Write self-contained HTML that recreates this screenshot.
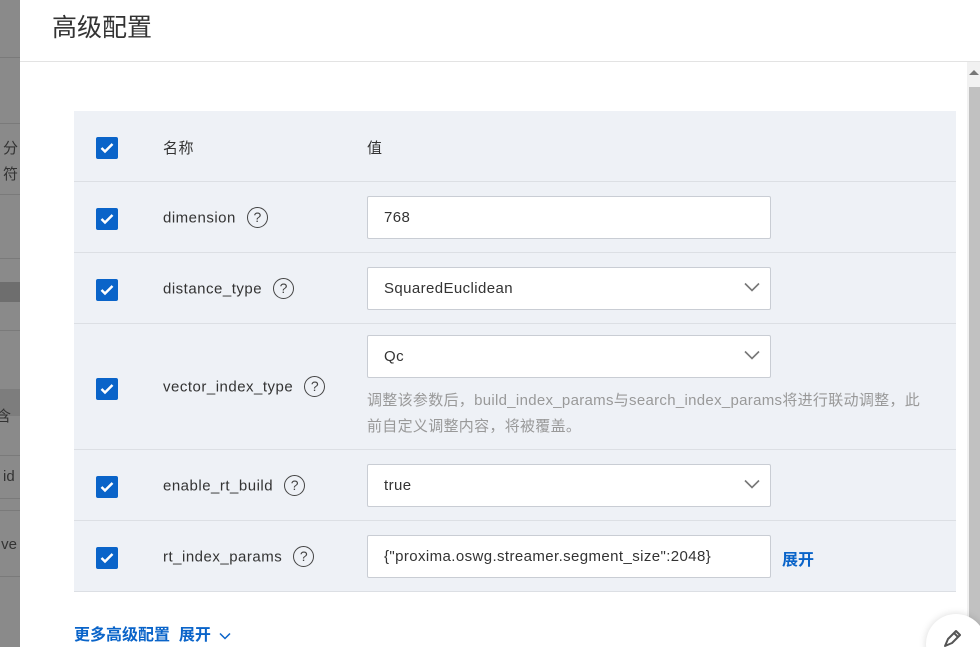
<!DOCTYPE html>
<html style="width:980px;height:647px;overflow:hidden"><head><meta charset="utf-8"><style>
*{margin:0;padding:0;box-sizing:border-box}
body{width:980px;height:647px;overflow:hidden;position:relative;background:#fff;font-family:"Liberation Sans","Noto Sans CJK SC",sans-serif;color:#333}
.ov{position:absolute;left:0;top:0;width:20px;height:647px;background:#8a8a8a;overflow:hidden}
.ov div{position:absolute;left:0;width:20px;border-top:1px solid #7a7a7a}
.ov span{position:absolute;left:3px;font-size:15px;color:#333;white-space:nowrap}
.modal{position:absolute;left:20px;top:0;width:960px;height:647px;background:#fff}
.title{position:absolute;left:52px;top:8px;font-size:25px;color:#333}
.hl{position:absolute;left:20px;right:0;top:61px;border-top:1px solid #e3e3e3}
.sb{position:absolute;left:967px;top:62px;width:13px;height:585px;background:#f1f1f1}
.sb .th{position:absolute;left:2px;top:25px;width:11px;height:560px;background:#c1c1c1}
.sb .ar{position:absolute;left:2px;top:8px;width:0;height:0;border-left:5px solid transparent;border-right:5px solid transparent;border-bottom:5px solid #777}
.tbl{position:absolute;left:74px;top:111px;width:882px;height:481px;background:#eef1f6;border-bottom:1px solid #dcdfe4}
.line{position:absolute;left:74px;width:882px;border-top:1px solid #dcdfe4}
.cb{position:absolute;left:96px;width:22px;height:22px;background:#0a64c9;border-radius:2px}
.cb svg{position:absolute;left:4px;top:5px}
.nm{position:absolute;left:163px;font-size:15px;color:#333;letter-spacing:0.5px}
.q{display:inline-block;width:21px;height:21px;border:1.5px solid #444;border-radius:50%;text-align:center;font-size:14px;line-height:18px;color:#444;margin-left:11px;vertical-align:middle;position:relative;top:-1px;letter-spacing:0}
.in{position:absolute;left:367px;width:404px;height:43px;background:#fff;border:1px solid #c9cdd4;border-radius:2px;font-size:15px;line-height:41px;padding-left:16px;color:#333;letter-spacing:0.4px}
.in svg{position:absolute;right:10px;top:14px}
.help{position:absolute;left:367px;font-size:15px;color:#999;line-height:26px;width:572px;letter-spacing:0.3px}
.blue{color:#0a64c9;font-weight:bold;font-size:16px;position:absolute}
.fab{position:absolute;left:926px;top:614px;width:60px;height:60px;border-radius:50%;background:#fff;box-shadow:0 0 8px rgba(0,0,0,.15)}
</style></head><body>
<div class="ov">
<div style="top:57px"></div><div style="top:123px"></div><div style="top:194px"></div><div style="top:258px"></div>
<div style="top:282px;height:20px;background:#6e6e6e;border:none"></div>
<div style="top:330px"></div>
<div style="top:389px;height:27px;background:#7d7d7d;border:none"></div>
<div style="top:455px"></div><div style="top:498px"></div><div style="top:510px"></div><div style="top:576px"></div>
<span style="top:137px">分</span><span style="top:163px">符</span>
<span style="top:405px;left:-4px">含</span><span style="top:468px">id</span><span style="top:536px;left:-3px">,ve</span>
</div>
<div class="modal"></div>
<div class="title">高级配置</div>
<div class="hl"></div>
<div class="sb"><div class="ar"></div><div class="th"></div></div>
<div class="tbl"></div>
<div class="line" style="top:181px"></div><div class="line" style="top:252px"></div><div class="line" style="top:323px"></div><div class="line" style="top:449px"></div><div class="line" style="top:520px"></div>

<div class="cb" style="top:137px"><svg width="14" height="12" viewBox="0 0 14 12"><path d="M1.5 6l3.5 3.5L12.5 2" stroke="#fff" stroke-width="2.5" fill="none"/></svg></div>
<div class="nm" style="top:137px">名称</div>
<div class="nm" style="left:367px;top:137px">值</div>

<div class="cb" style="top:208px"><svg width="14" height="12" viewBox="0 0 14 12"><path d="M1.5 6l3.5 3.5L12.5 2" stroke="#fff" stroke-width="2.5" fill="none"/></svg></div>
<div class="nm" style="top:208px">dimension<span class="q">?</span></div>
<div class="in" style="top:196px">768</div>

<div class="cb" style="top:279px"><svg width="14" height="12" viewBox="0 0 14 12"><path d="M1.5 6l3.5 3.5L12.5 2" stroke="#fff" stroke-width="2.5" fill="none"/></svg></div>
<div class="nm" style="top:279px">distance_type<span class="q">?</span></div>
<div class="in" style="top:267px">SquaredEuclidean<svg width="16" height="10" viewBox="0 0 16 10"><path d="M1 1.5l7 7 7-7" stroke="#777" stroke-width="1.6" fill="none"/></svg></div>

<div class="cb" style="top:378px"><svg width="14" height="12" viewBox="0 0 14 12"><path d="M1.5 6l3.5 3.5L12.5 2" stroke="#fff" stroke-width="2.5" fill="none"/></svg></div>
<div class="nm" style="top:377px">vector_index_type<span class="q">?</span></div>
<div class="in" style="top:335px">Qc<svg width="16" height="10" viewBox="0 0 16 10"><path d="M1 1.5l7 7 7-7" stroke="#777" stroke-width="1.6" fill="none"/></svg></div>
<div class="help" style="top:388px">调整该参数后，build_index_params与search_index_params将进行联动调整，此<br>前自定义调整内容，将被覆盖。</div>

<div class="cb" style="top:476px"><svg width="14" height="12" viewBox="0 0 14 12"><path d="M1.5 6l3.5 3.5L12.5 2" stroke="#fff" stroke-width="2.5" fill="none"/></svg></div>
<div class="nm" style="top:476px">enable_rt_build<span class="q">?</span></div>
<div class="in" style="top:464px">true<svg width="16" height="10" viewBox="0 0 16 10"><path d="M1 1.5l7 7 7-7" stroke="#777" stroke-width="1.6" fill="none"/></svg></div>

<div class="cb" style="top:547px"><svg width="14" height="12" viewBox="0 0 14 12"><path d="M1.5 6l3.5 3.5L12.5 2" stroke="#fff" stroke-width="2.5" fill="none"/></svg></div>
<div class="nm" style="top:547px">rt_index_params<span class="q">?</span></div>
<div class="in" style="top:535px">{"proxima.oswg.streamer.segment_size":2048}</div>
<div class="blue" style="left:782px;top:546px">展开</div>

<div class="blue" style="left:74px;top:621px">更多高级配置&nbsp; 展开 <svg width="12" height="8" viewBox="0 0 12 8" style="margin-left:4px"><path d="M1 1.5l5 5 5-5" stroke="#0a64c9" stroke-width="1.5" fill="none"/></svg></div>

<div class="fab"><svg width="24" height="24" viewBox="0 0 24 24" style="position:absolute;left:15px;top:12px"><path d="M4 20l3-7 8-8 4 4-8 8z M13 7l4 4" stroke="#555" stroke-width="2" fill="none" stroke-linejoin="round"/></svg></div>
</body></html>
